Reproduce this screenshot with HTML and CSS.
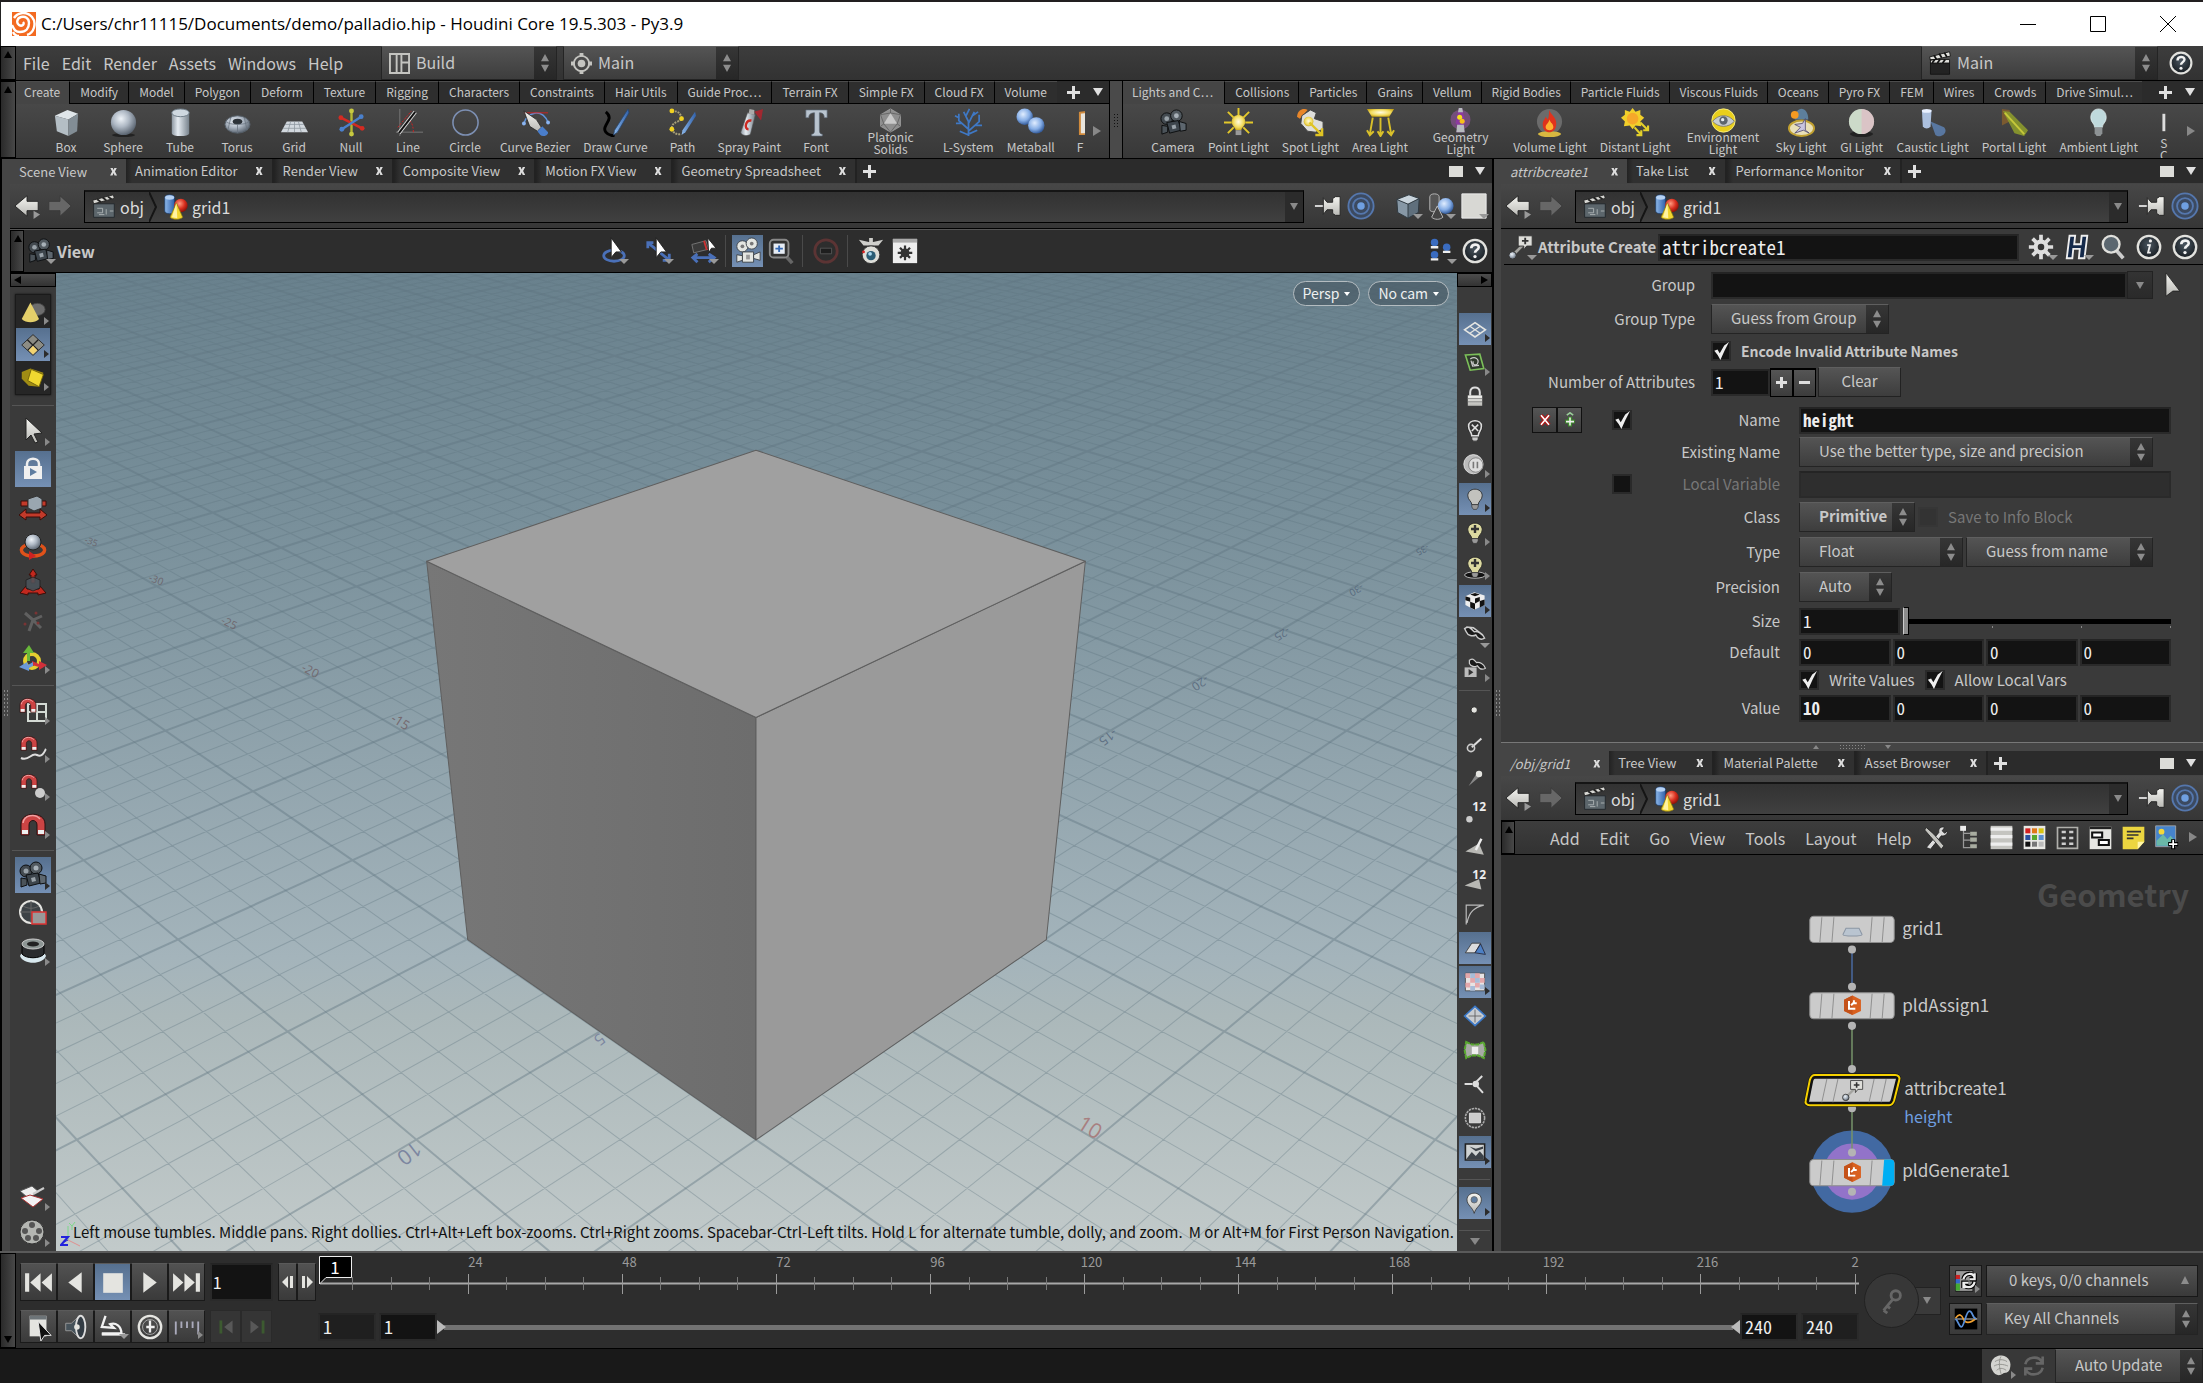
FILE: index.html
```
<!DOCTYPE html>
<html lang="en">
<head>
<meta charset="utf-8">
<title>palladio.hip - Houdini Core</title>
<link rel="stylesheet" href="styles.css">
</head>
<body>
<svg class="defs" aria-hidden="true">
  <defs>
    <linearGradient id="gw" x1="0" y1="0" x2="0" y2="1"><stop offset="0" stop-color="#f4f4f0"/><stop offset="1" stop-color="#b9b9b5"/></linearGradient>
    <linearGradient id="gs" x1="0" y1="0" x2="1" y2="0"><stop offset="0" stop-color="#8e98a2"/><stop offset=".35" stop-color="#e6ecf2"/><stop offset="1" stop-color="#77828c"/></linearGradient>
    <linearGradient id="gl" x1="0" y1="0" x2="1" y2="0"><stop offset="0" stop-color="#8db8ea"/><stop offset="1" stop-color="#2f5fa8"/></linearGradient>
    <radialGradient id="gb" cx=".4" cy=".35" r=".65"><stop offset="0" stop-color="#eef3f8"/><stop offset=".5" stop-color="#aeb8c4"/><stop offset="1" stop-color="#5c6672"/></radialGradient>
    <radialGradient id="gblue" cx=".4" cy=".35" r=".65"><stop offset="0" stop-color="#e0edff"/><stop offset=".6" stop-color="#86aee6"/><stop offset="1" stop-color="#345c9c"/></radialGradient>
    <radialGradient id="gred" cx=".4" cy=".35" r=".65"><stop offset="0" stop-color="#ff9a80"/><stop offset=".6" stop-color="#d82e1e"/><stop offset="1" stop-color="#8a120a"/></radialGradient>
    <radialGradient id="gy" cx=".5" cy=".45" r=".6"><stop offset="0" stop-color="#fffbe0"/><stop offset=".6" stop-color="#f2dc60"/><stop offset="1" stop-color="#c4a010"/></radialGradient>
    <radialGradient id="gd" cx=".5" cy=".4" r=".6"><stop offset="0" stop-color="#4a5660"/><stop offset="1" stop-color="#161b20"/></radialGradient>
  </defs>
  <symbol id="cam" viewBox="0 0 30 30"><g stroke="#0c0e10" stroke-width="1"><circle cx="8" cy="11" r="6" fill="#434a50"/><circle cx="18" cy="8" r="6" fill="#525a60"/><path d="M8 15l12-2 3 10-12 3z" fill="#3d454c"/><path d="M21 14l7 2 0 7-6 1z" fill="#5d666e"/><path d="M3 18l6 1v6l-6 2z" fill="#4b5359"/></g><circle cx="8" cy="11" r="2.500" fill="#98a1a8"/><circle cx="18" cy="8" r="2.500" fill="#a8b1b8"/><path d="M13 18l4-1 1 4-4 1z" fill="#9aa3aa"/></symbol>
  <symbol id="camw" viewBox="0 0 30 30"><g fill="#e4e6e2" stroke="#3c4248" stroke-width="1"><circle cx="9" cy="10" r="6"/><circle cx="19" cy="7" r="6"/><path d="M9 16h12v11H9z"/><path d="M21 19l7-3v9l-7-2z"/><path d="M3 19l6 1v5l-6 2z"/></g><circle cx="9" cy="10" r="2" fill="#777"/><circle cx="19" cy="7" r="2" fill="#777"/><path d="M13 19h4v5h-4z" fill="#999"/></symbol>
  <symbol id="clap" viewBox="0 0 30 30"><path d="M4 12h23v15H4z" fill="#5c666c"/><path d="M4 12h23v15H4z" fill="none" stroke="#23282b"/><path d="M3 8L26 2l1 4L4 12z" fill="#d8d8d4" stroke="#222"/><path d="M8 7l4 3M14 5l4 3M20 4l4 3" stroke="#222" stroke-width="2"/><path d="M8 17h6v5H8M18 18v6M22 20h4M10 24h6" stroke="#aeb4b6" fill="none"/></symbol>
  <symbol id="clapb" viewBox="0 0 30 30"><path d="M4 14h22v14H4z" fill="#232323" stroke="#111"/><path d="M3 8L26 2l1 5L4 12zM4 11h22v4H4z" fill="#e0e0dc" stroke="#111"/><path d="M8 6l3 5M14 4l3 5M20 3l3 5M9 11l-3 4M15 11l-3 4M21 11l-3 4" stroke="#111" stroke-width="2"/></symbol>
  <symbol id="shapes" viewBox="0 0 30 30"><path d="M3 5c0-4 11-4 11 0v15c0 4-11 4-11 0z" fill="url(#gl)" stroke="#1c3a66" stroke-width=".8"/><ellipse cx="8.500" cy="5" rx="5" ry="2.500" fill="#b6d2f4"/><circle cx="21" cy="14" r="7.500" fill="url(#gred)"/><path d="M16 11l7 16c-3 3-11 3-14 0z" fill="#f2d630" stroke="#8d7a10" stroke-width=".8"/><path d="M16 11l1 17-6-1z" fill="#fff3a0"/></symbol>
  <symbol id="back" viewBox="0 0 30 30"><path d="M2 15L15 4v6h12v10H15v6z" fill="url(#gw)" stroke="#222"/><path d="M22 20l7 4-7 5z" fill="#999"/></symbol>
  <symbol id="fwd" viewBox="0 0 30 30"><path d="M27 15L15 4v6H3v10h12v6z" fill="#676767" stroke="#3a3a3a"/></symbol>
  <symbol id="pin" viewBox="0 0 30 30"><path d="M1 15h10" stroke="#ddd" stroke-width="2"/><path d="M10 6l4 5h6V7l3-2h5v20h-5l-3-2v-4h-6l-4 5z" fill="url(#gw)" stroke="#222"/></symbol>
  <symbol id="target" viewBox="0 0 30 30"><g fill="none" stroke="#5577ad" stroke-width="2"><circle cx="15" cy="15" r="13.500" fill="#3c4a60"/><circle cx="15" cy="15" r="8.500"/></g><circle cx="15" cy="15" r="4" fill="#6f9fe0"/></symbol>
  <symbol id="help" viewBox="0 0 30 30"><circle cx="15" cy="15" r="12" fill="url(#gd)" stroke="#e2e2de" stroke-width="2.500"/><path d="M11 12c0-5 8-5 8-1 0 3-4 3-4 6" fill="none" stroke="#f2f2f2" stroke-width="2.800"/><circle cx="15" cy="21" r="1.800" fill="#f2f2f2"/></symbol>
  <symbol id="info" viewBox="0 0 30 30"><circle cx="15" cy="15" r="12" fill="url(#gd)" stroke="#e2e2de" stroke-width="2.500"/><path d="M13 13h3l-2 8h3" fill="none" stroke="#eee" stroke-width="2"/><circle cx="16.500" cy="8.500" r="1.700" fill="#eee"/></symbol>
  <symbol id="cube" viewBox="0 0 30 30"><path d="M3 8l13-5 11 4-12 6z" fill="#c9d4dc"/><path d="M3 8l12 5v15L4 22z" fill="#8798a6"/><path d="M15 13l12-6-1 15-11 6z" fill="#5f6f7c"/><path d="M3 8l13-5 11 4-1 15-11 6L4 22zM3 8l12 5 12-6M15 13v15" fill="none" stroke="#2d3840"/></symbol>
  <symbol id="attr" viewBox="0 0 30 30"><path d="M5 25L17 13" stroke="#a4a4a0" stroke-width="3"/><path d="M12 3h15v11h-6l-3 4v-4h-6z" fill="#dededa" stroke="#333"/><path d="M19.500 5v7M16 8.500h7" stroke="#333" stroke-width="2"/><circle cx="6" cy="24" r="4" fill="url(#gb)" stroke="#333"/></symbol>
  <symbol id="arrow" viewBox="0 0 30 30"><path d="M8 2l16 15-8 1 4 8-3 1-4-8-5 5z" fill="url(#gw)" stroke="#222"/></symbol>
  <symbol id="pick" viewBox="0 0 30 30"><path d="M8 1l16 21-8 0-8 6z" fill="url(#gw)" stroke="#222"/></symbol>
  <symbol id="magnet" viewBox="0 0 30 30"><path d="M3 26V15C3 2 27 2 27 15v11h-8V16c0-6-8-6-8 0v10z" fill="#cc4444" stroke="#2a1010"/><path d="M5 14c1-8 12-10 17-4" stroke="#f0a0a0" fill="none" stroke-width="1.500"/><path d="M4 21h6v4H4zM20 21h6v4h-6z" fill="#eee"/></symbol>
  <symbol id="bulb" viewBox="0 0 30 30"><path d="M11 22c0-4-5-6-5-11C6 0 24 0 24 11c0 5-5 7-5 11z" fill="currentColor" stroke="#222"/><path d="M11 22h8v3l-2 3h-4l-2-3z" fill="#999" stroke="#222" stroke-width=".7"/></symbol>
  <symbol id="gear" viewBox="0 0 30 30"><g stroke="currentColor" stroke-width="4"><path d="M15 2v26M2 15h26M6 6l18 18M24 6L6 24"/></g><circle cx="15" cy="15" r="8" fill="currentColor"/><circle cx="15" cy="15" r="3.500" fill="#333"/></symbol>
  <symbol id="hex" viewBox="0 0 30 30"><path d="M15 1l12 6v16l-12 6-12-6V7z" fill="#d9601f"/><path d="M15 1v28L3 23V7z" fill="#c4521a"/><path d="M10 9v11h9M13 15l4-4M17 8v4h4" fill="none" stroke="#fff" stroke-width="2.800"/></symbol>
</svg>

<header class="titlebar">
  <svg class="logo" viewBox="0 0 24 24"><path d="M0 0h24v24H0z" fill="#f36a21"/><path d="M1 20C2 22 4 24 7 24M0 13c2 4 3 7 8 7 6 0 9-4 9-9s-4-7-8-6-5 6-2 8 6-1 4-3M2 6C6 0 15-1 20 5s2 16-5 18" fill="none" stroke="#fff" stroke-width="2.400"/></svg>
  <h1>C:/Users/chr11115/Documents/demo/palladio.hip - Houdini Core 19.5.303 - Py3.9</h1>
  <div class="win">
    <button aria-label="Minimize"><svg viewBox="0 0 16 16"><path d="M0 8.500h16" /></svg></button>
    <button aria-label="Maximize"><svg viewBox="0 0 16 16"><path d="M.5.5h15v15H.5z"/></svg></button>
    <button aria-label="Close"><svg viewBox="0 0 16 16"><path d="M0 0l16 16M16 0L0 16"/></svg></button>
  </div>
</header>

<nav class="menubar">
  <span class="handle up"></span>
  <ul class="menu"><li>File</li><li>Edit</li><li>Render</li><li>Assets</li><li>Windows</li><li>Help</li></ul>
  <label class="combo desk"><svg viewBox="0 0 22 22"><path d="M1 1h20v20H1zM8 1v20M13 1v20M13 10h8" fill="none" stroke="#c4c4c0" stroke-width="2"/></svg><select aria-label="Desktop"><option>Build</option></select></label>
  <label class="combo desk"><svg viewBox="0 0 22 22"><circle cx="11" cy="11" r="8" fill="none" stroke="#c4c4c0" stroke-width="2"/><circle cx="11" cy="11" r="4" fill="#c4c4c0"/><path d="M9 0h4v4H9zM9 18h4v4H9zM0 9h4v4H0zM18 9h4v4h-4z" fill="#c4c4c0"/></svg><select aria-label="Radial menu"><option>Main</option></select></label>
  <span class="grow"></span>
  <label class="combo take"><svg viewBox="0 0 30 30"><use href="#clapb"/></svg><select aria-label="Take"><option>Main</option></select></label>
  <button class="ib" aria-label="Help"><svg><use href="#help"/></svg></button>
</nav>

<section class="shelves">
  <span class="handle up"></span>
  <div class="shelf left">
    <div class="stabs"><button class="on">Create</button><button>Modify</button><button>Model</button><button>Polygon</button><button>Deform</button><button>Texture</button><button>Rigging</button><button>Characters</button><button>Constraints</button><button>Hair Utils</button><button>Guide Proc…</button><button>Terrain FX</button><button>Simple FX</button><button>Cloud FX</button><button>Volume</button><span class="plus"></span><span class="dn"></span></div>
    <div class="tools">
      <button><svg viewBox="0 0 30 30"><path d="M3 8l13-6 11 4-10 6z" fill="#dfe5e9"/><path d="M3 8l14 4v17L5 24z" fill="#b4bec5"/><path d="M17 12l10-6-1 18-9 5z" fill="#828d95"/></svg><span>Box</span></button>
      <button><svg viewBox="0 0 30 30"><ellipse cx="15" cy="28" rx="12" ry="2" fill="#222"/><circle cx="15" cy="15" r="13" fill="url(#gb)"/></svg><span>Sphere</span></button>
      <button><svg viewBox="0 0 30 30"><path d="M6 5v21c0 4 18 4 18 0V5z" fill="url(#gs)"/><ellipse cx="15" cy="5" rx="9" ry="4" fill="#cfd8e0" stroke="#6f7c88"/></svg><span>Tube</span></button>
      <button><svg viewBox="0 0 30 30"><ellipse cx="15" cy="17" rx="13" ry="9" fill="url(#gb)" stroke="#555e68"/><ellipse cx="15" cy="14" rx="5" ry="3" fill="#2c3238"/><path d="M3 14c4 4 20 4 24 0M8 10l-3 13M22 10l3 13M15 17v9" fill="none" stroke="#6a7480" stroke-width=".8"/></svg><span>Torus</span></button>
      <button><svg viewBox="0 0 30 30"><path d="M7 14h16l6 11H1z" fill="#d2d8de"/><path d="M5 17h20M3 21h24M11 14l-3 11M15 14v11M19 14l3 11" stroke="#8d969e" stroke-width=".8"/></svg><span>Grid</span></button>
      <button><svg viewBox="0 0 30 30"><g stroke-width="2.500"><path d="M15 2v26" stroke="#b6b832"/><path d="M4 10l22 11" stroke="#d42b22"/><path d="M5 22L25 9" stroke="#4a80cc"/></g><circle cx="15" cy="3" r="2.500" fill="#c8ca40"/><circle cx="15" cy="27" r="2.500" fill="#c8ca40"/><circle cx="4" cy="10" r="2.500" fill="#d42b22"/><circle cx="26" cy="21" r="2.500" fill="#d42b22"/><circle cx="5" cy="22" r="2.500" fill="#4a80cc"/><circle cx="25" cy="9" r="2.500" fill="#4a80cc"/></svg><span>Null</span></button>
      <button><svg viewBox="0 0 30 30"><path d="M6 1v28M2 25h28" stroke="#777"/><path d="M20 25C20 15 16 12 12 10M4 20L18 3" fill="none" stroke="#c22" stroke-dasharray="2 1.500"/><path d="M5 26L22 4" stroke="#ddd" stroke-width="4"/><path d="M5 26L22 4" stroke="#111" stroke-width="2"/></svg><span>Line</span></button>
      <button><svg viewBox="0 0 30 30"><circle cx="15" cy="15" r="13" fill="none" stroke="#7d90b4" stroke-width="1.600"/></svg><span>Circle</span></button>
      <button><svg viewBox="0 0 30 30"><path d="M3 16C6 4 22 0 28 15" fill="none" stroke="#5f93dc" stroke-width="1.500"/><path d="M3 5h25" stroke="#c22"/><circle cx="3" cy="16" r="2" fill="#8ab4f0"/><circle cx="28" cy="15" r="2" fill="#8ab4f0"/><path d="M3 3l13 9 5 8-4 4-8-5z" fill="url(#gw)" stroke="#222" stroke-width=".8"/><path d="M17 24l5-5 6 6c0 4-6 5-8 3z" fill="#4a7ecb"/></svg><span>Curve Bezier</span></button>
      <button><svg viewBox="0 0 30 30"><path d="M5 4c6 5 3 9 0 14s0 10 9 11" fill="none" stroke="#000" stroke-width="3"/><path d="M28 1l1 4-12 20-4 3 1-5z" fill="url(#gl)" stroke="#27466f" stroke-width=".8"/></svg><span>Draw Curve</span></button>
      <button><svg viewBox="0 0 30 30"><path d="M4 4c6-2 9 2 10 6S4 14 4 20s6 8 9 7" fill="none" stroke="#a8a078" stroke-dasharray="2 1" stroke-width="2"/><circle cx="4" cy="3" r="2.500" fill="#f0d020"/><circle cx="14" cy="11" r="2.500" fill="#f0d020"/><circle cx="4" cy="22" r="2.500" fill="#f0d020"/><path d="M28 4l1 4-11 17-4 3 1-5z" fill="url(#gl)"/></svg><span>Path</span></button>
      <button><svg viewBox="0 0 30 30"><path d="M13 5l8 2-5 20c-3 3-10 1-10-2z" fill="url(#gs)" stroke="#555" stroke-width=".6"/><path d="M15 1l5 1v5l-6-1z" fill="#aaa"/><path d="M20 4l9-3-2 12z" fill="#b8202a" opacity=".8"/><path d="M17 13c-6-1-8 9-3 9" fill="none" stroke="#cc2a22" stroke-width="2.500"/></svg><span>Spray Paint</span></button>
      <button><svg viewBox="0 0 30 30"><path d="M4 2h22v8h-3c0-4-2-5-5-5v18c0 3 1 4 3 4v2H10v-2c2 0 3-1 3-4V5c-3 0-6 1-6 5H4z" fill="#b9c4cf" stroke="#5e6a76" stroke-width=".7"/></svg><span>Font</span></button>
      <button class="wide"><svg viewBox="0 0 30 30"><path d="M15 1l12 7v14l-12 7-12-7V8z" fill="#8f8f8f" stroke="#bbb" stroke-width=".6"/><path d="M15 6l8 13H7z" fill="#c9c9c9"/><path d="M15 1v5l12 2-4 11 4 3M15 6L3 8l4 11-4 3M7 19l8 10 8-10" fill="none" stroke="#555" stroke-width=".8"/></svg><span>Platonic<br>Solids</span></button>
      <button><svg viewBox="0 0 30 30"><g fill="none" stroke="#3f78c4" stroke-width="1.800"><path d="M15 29V14L10 4M15 16l6-12M15 22L5 13V6M15 24l11-10V7M8 16H2M22 18h7M15 27l9-4M15 28l-9-4M12 9l4-8M19 8l6-4M5 10L1 8"/></g></svg><span>L-System</span></button>
      <button><svg viewBox="0 0 30 30"><circle cx="9" cy="9" r="8.500" fill="url(#gblue)"/><circle cx="21" cy="18" r="8.500" fill="url(#gblue)"/></svg><span>Metaball</span></button>
      <button class="cut"><svg viewBox="0 0 30 30"><path d="M3 5l16-2v24H3z" fill="#e9e5dd" stroke="#d08a3c" stroke-width="2"/></svg><span>F</span></button>
      <span class="rt"></span>
    </div>
  </div>
  <span class="grip"></span>
  <div class="shelf right">
    <div class="stabs"><button class="on">Lights and C…</button><button>Collisions</button><button>Particles</button><button>Grains</button><button>Vellum</button><button>Rigid Bodies</button><button>Particle Fluids</button><button>Viscous Fluids</button><button>Oceans</button><button>Pyro FX</button><button>FEM</button><button>Wires</button><button>Crowds</button><button>Drive Simul…</button><span class="plus"></span><span class="dn"></span></div>
    <div class="tools">
      <button><svg><use href="#cam"/></svg><span>Camera</span></button>
      <button><svg viewBox="0 0 30 30"><g stroke="#e3c82a" stroke-width="2"><path d="M15 0v8M0 15h8M22 15h8M4 4l6 6M26 4l-6 6M4 26l6-6M26 26l-6-6"/></g><path d="M12 23c0-3-4-4-4-9 0-9 14-9 14 0 0 5-4 6-4 9z" fill="url(#gy)"/><path d="M12 23h6v5h-6z" fill="#999"/></svg><span>Point Light</span></button>
      <button><svg viewBox="0 0 30 30"><path d="M1 9C2 0 9 0 12 2l-8 9z" fill="#e8862a"/><path d="M6 8l9-6 6 3-2 6 9 3v8l-8 3-8-1-7-8z" fill="#dededa" stroke="#444"/><circle cx="13" cy="14" r="5" fill="url(#gy)"/><path d="M14 15l12 12M27 21v7h-7" fill="none" stroke="#e0c424" stroke-width="2.500"/></svg><span>Spot Light</span></button>
      <button><svg viewBox="0 0 30 30"><path d="M1 1h28l-5 8H6z" fill="url(#gy)"/><g fill="none" stroke="#d9c02a" stroke-width="2"><path d="M7 10L4 27M15 10v18M23 10l3 17M1 23l3 5 4-4M12 24l3 5 3-5M22 24l4 4 3-5"/></g></svg><span>Area Light</span></button>
      <button class="wide"><svg viewBox="0 0 30 30"><circle cx="15" cy="14" r="12" fill="#9a56a8" opacity=".55"/><path d="M13 0h4l4 18-3 3 2 8H10l2-8-3-3z" fill="#8b3aa0"/><path d="M13 0h4l1 5h-6zM11 20h8l1 9H10z" fill="#b8bcc0"/><circle cx="14" cy="11" r="3" fill="#f6e11a"/><circle cx="17" cy="16" r="3" fill="#f6c01a"/></svg><span>Geometry<br>Light</span></button>
      <button><svg viewBox="0 0 30 30"><circle cx="15" cy="14" r="13" fill="#6b6b6b"/><ellipse cx="15" cy="27" rx="12" ry="3" fill="#d8b840"/><path d="M15 2c1 5 7 7 7 14 0 12-14 12-14 1 0-4 2-5 3-8l2 3c2-3 1-6 2-10z" fill="#e0331c"/><path d="M15 12c1 4 4 4 4 8s-8 4-8 0c0-3 3-4 4-8z" fill="#ffb030"/></svg><span>Volume Light</span></button>
      <button><svg viewBox="0 0 30 30"><path d="M12 0l3 4 5-2v5l4 3-4 4 1 5-6-1-3 4-3-4-6 1 1-5-4-4 4-3V2l5 2z" fill="#f2cf2a"/><circle cx="12" cy="11" r="6" fill="#f6a82a"/><path d="M14 20l7 8M16 28h5v-5M20 15l8 8M23 23h5v-5" fill="none" stroke="#e3d02a" stroke-width="2.200"/></svg><span>Distant Light</span></button>
      <button class="wide"><svg viewBox="0 0 30 30"><circle cx="15" cy="15" r="14" fill="#e9cf1c" stroke="#fff48a"/><path d="M2 16c7-9 19-9 26 0-7 8-19 8-26 0z" fill="#c6ccd0" stroke="#777"/><circle cx="15" cy="15" r="5" fill="#5c666e"/><circle cx="14" cy="14" r="2" fill="#e8eef2"/></svg><span>Environment<br>Light</span></button>
      <button><svg viewBox="0 0 30 30"><path d="M8 12C8-3 22-3 22 12z" fill="#5d7f9c"/><circle cx="8" cy="7" r="4" fill="#f59a22"/><ellipse cx="15" cy="21" rx="13" ry="8" fill="#e8dfb8" stroke="#c0a030" stroke-width="2"/><path d="M19 11v12l4 3-6-3-9 3 6-6-6-3 8-1z" fill="#c8c4e0" stroke="#4b4468" stroke-width=".8"/></svg><span>Sky Light</span></button>
      <button><svg viewBox="0 0 30 30"><ellipse cx="15" cy="27" rx="12" ry="3" fill="#222"/><circle cx="15" cy="14" r="13" fill="#dcdcd6"/><path d="M15 1a13 13 0 0 1 0 26z" fill="#d8b4ba" opacity=".6"/><path d="M15 1a13 13 0 0 0 0 26z" fill="#bcd8bc" opacity=".5"/></svg><span>GI Light</span></button>
      <button><svg viewBox="0 0 30 30"><path d="M13 14l14 6c5 6-4 12-9 8z" fill="#5f84b8" opacity=".8"/><path d="M4 2h10l-1 17c-2 3-6 3-8 0z" fill="#b8cef0" opacity=".9"/><ellipse cx="9" cy="3" rx="5" ry="2" fill="#e8f0ff"/></svg><span>Caustic Light</span></button>
      <button><svg viewBox="0 0 30 30"><path d="M2 1l8 1v12l-8 4z" fill="#7a5a30"/><path d="M3 3l7 1 19 19-4 6-10-3z" fill="#8c9a2c" opacity=".9"/><path d="M5 5l20 22" stroke="#c6c83a" stroke-width="2"/></svg><span>Portal Light</span></button>
      <button><svg viewBox="0 0 30 30"><path d="M11 20c0-4-4-5-4-10 0-12 16-12 16 0 0 5-4 6-4 10z" fill="#bfd9dc" stroke="#e8f4f4" stroke-width=".7"/><path d="M11 20h8v6l-2 3h-4l-2-3z" fill="#8d9294"/></svg><span>Ambient Light</span></button>
      <button class="cut"><svg viewBox="0 0 30 30"><path d="M4 6v18" stroke="#ddd" stroke-width="3"/></svg><span>S<br>C</span></button>
      <span class="rt"></span>
    </div>
  </div>
</section>

<main class="desk-area">
  <div class="vsplit"></div>
  <section class="pane scene">
    <div class="ptabs"><button class="on">Scene View<i></i></button><button>Animation Editor<i></i></button><button>Render View<i></i></button><button>Composite View<i></i></button><button>Motion FX View<i></i></button><button>Geometry Spreadsheet<i></i></button><span class="plus"></span><span class="grow"></span><span class="sq"></span><span class="dn"></span></div>
    <div class="path">
      <button class="ib"><svg><use href="#back"/></svg></button><button class="ib"><svg><use href="#fwd"/></svg></button>
      <div class="crumbs"><a href="#obj"><svg><use href="#clap"/></svg>obj</a><svg class="chev" viewBox="0 0 8 30"><path d="M0 0l7 15-7 15" fill="none" stroke="#151515" stroke-width="2"/></svg><a href="#grid1"><svg><use href="#shapes"/></svg>grid1</a><span class="pd"></span></div>
      <button class="ib"><svg><use href="#pin"/></svg></button><button class="ib"><svg><use href="#target"/></svg></button>
      <button class="ib c m1"><svg><use href="#cube"/></svg></button>
      <button class="ib c"><svg viewBox="0 0 30 30"><path d="M3 5c0-4 10-4 10 0v14c0 3-10 3-10 0z" fill="#555" stroke="#bbb"/><circle cx="20" cy="15" r="8.500" fill="url(#gblue)"/><path d="M11 15l6 12c-3 3-9 3-12 0z" fill="#444" stroke="#bbb"/></svg></button>
      <button class="ib c"><svg viewBox="0 0 30 30"><path d="M2 2h26v26H2z" fill="#d8d8d4" stroke="#eee"/></svg></button>
    </div>
    <div class="vbar">
      <span class="handle up"></span>
      <button class="ib c"><svg><use href="#cam"/></svg></button><b>View</b>
      <span class="grow"></span>
      <div class="vtools">
        <div class="vg first">
          <button class="ib c"><svg viewBox="0 0 30 30"><ellipse cx="15" cy="20" rx="11" ry="6" fill="none" stroke="#4a70b8" stroke-width="3"/><path d="M12 1l11 15-6 0-5 6z" fill="#fff" stroke="#222"/></svg></button>
          <button class="ib c"><svg viewBox="0 0 30 30"><path d="M3 6l22 18M3 12V6h6M19 25h7v-7" fill="none" stroke="#4a70b8" stroke-width="3"/><path d="M12 1l11 15-6 0-5 6z" fill="#fff" stroke="#222"/></svg></button>
          <button class="ib c"><svg viewBox="0 0 30 30"><path d="M2 8l15-4 3 9-16 4z" fill="#3a3a3a" stroke="#777"/><path d="M15 4l3 10" stroke="#c33" stroke-width="2"/><path d="M4 22h20M8 18l-5 4 5 5M20 18l6 4-6 5" fill="none" stroke="#4a70b8" stroke-width="3"/><path d="M19 1l9 11h-5l-3 5z" fill="#fff" stroke="#222"/></svg></button>
        </div>
        <div class="vg">
          <button class="ib hl"><svg><use href="#camw"/></svg></button>
          <button class="ib"><svg viewBox="0 0 30 30"><path d="M20 20l7 8" stroke="#666" stroke-width="4"/><rect x="3" y="3" width="20" height="19" rx="4" fill="#333" stroke="#888" stroke-width="2"/><path d="M7 7h12v11H7z" fill="#e6ecf4"/><path d="M9 12.500h8M13 9v7" stroke="#3468b4" stroke-width="2"/></svg></button>
        </div>
        <div class="vg">
          <button class="ib"><svg viewBox="0 0 30 30"><circle cx="15" cy="15" r="12" fill="none" stroke="#5c3434" stroke-width="3"/><path d="M9 12h12v6H9z" fill="#1e1e1e" stroke="#555"/></svg></button>
        </div>
        <div class="vg">
          <button class="ib"><svg viewBox="0 0 30 30"><path d="M2 3l13 3 13-3-5 6H7zM13 1h4v6h-4z" fill="#cfcfcb"/><circle cx="15" cy="19" r="9.500" fill="#deded8" stroke="#333"/><circle cx="15" cy="20" r="5" fill="#2a5c74"/><circle cx="14" cy="18" r="2" fill="#a8d8f0"/><circle cx="7" cy="16" r="1.500" fill="#d22"/></svg></button>
          <button class="ib dark"><svg viewBox="0 0 30 30"><path d="M2 2h26v26H2z" fill="#eee"/><path d="M2 2h26v4H2z" fill="#aaa"/><use href="#gear" x="6" y="8" width="18" height="18"/></svg></button>
        </div>
      </div>
      <span class="grow"></span>
      <button class="ib c"><svg viewBox="0 0 30 30"><g fill="#3a6cc0"><circle cx="7" cy="6" r="4"/><circle cx="7" cy="19" r="4"/><circle cx="20" cy="11" r="4"/></g><path d="M3 11h8M3 24h8M16 16h8" stroke="#eee" stroke-width="2.500"/></svg></button>
      <button class="ib"><svg><use href="#help"/></svg></button>
    </div>
    <div class="work">
      <aside class="ltools">
        <span class="hh lf"></span>
        <div class="tgroup">
          <button class="ib r"><svg viewBox="0 0 30 30"><ellipse cx="20" cy="12" rx="9" ry="7" fill="#6d6d6d" stroke="#444"/><path d="M12 4l10 19c-5 5-15 5-20 0z" fill="#e4cf6a"/></svg></button>
          <button class="ib r hl"><svg viewBox="0 0 30 30"><path d="M15 3l13 12-13 12L2 15z" fill="#8c8c84" stroke="#222"/><path d="M8.500 9L21 21M21 9L9 21" stroke="#222" stroke-width="1.500"/><path d="M15 16l5 5-5 5-5-5z" fill="#f3d470"/></svg></button>
          <button class="ib r"><svg viewBox="0 0 30 30"><path d="M2 8l10-4 15 5-5 16-12-1-8-8z" fill="#a08c14"/><path d="M13 5l14 6-5 14-13-7z" fill="#f0d830" stroke="#6d5e08"/></svg></button>
        </div>
        <span class="sep"></span>
        <button class="tb r"><svg><use href="#arrow"/></svg></button>
        <button class="tb hl"><svg viewBox="0 0 30 30"><path d="M9 13V10c0-7 12-7 12 0v3" fill="none" stroke="#eee" stroke-width="2.500"/><path d="M6 12h18v13H6z" fill="#f0f0f0"/><path d="M12 14l7 4-7 4z" fill="#5f7da0"/></svg></button>
        <button class="tb"><svg viewBox="0 0 30 30"><path d="M1 23l7-6v4h14v-4l7 6-7 5v-3H8v3zM3 9h7v5H3zM22 9h6v5h-6z" fill="#c23a2a" stroke="#3a0d08"/><path d="M10 7l9-3 5 3v9l-8 3-6-3z" fill="#9aa6b0" stroke="#333"/></svg></button>
        <button class="tb"><svg viewBox="0 0 30 30"><path d="M8 15C-1 19 4 26 15 26M22 15c9 4 4 11-7 11" fill="none" stroke="#e0521a" stroke-width="3.500"/><path d="M11 21l7 5-7 4z" fill="#c22"/><circle cx="15" cy="12" r="8" fill="url(#gb)" stroke="#222"/></svg></button>
        <button class="tb"><svg viewBox="0 0 30 30"><path d="M15 1l4 6h-2v8h-4V7h-2zM2 25l6-7 1 3h12l1-3 6 7-8 2v-2H10v2z" fill="#c2281e" stroke="#3a0d08"/><path d="M8 12l7-3 7 3v8l-7 3-7-3z" fill="#4c555c" opacity=".85" stroke="#222"/></svg></button>
        <button class="tb"><svg viewBox="0 0 30 30"><g stroke="#606060" stroke-width="3"><path d="M15 14L7 7M15 14l9-4M15 14l-4 11M15 14l8 8"/></g><g fill="#7a3434"><circle cx="18" cy="7" r="1.500"/><circle cx="7" cy="18" r="1.500"/><circle cx="20" cy="17" r="1.500"/></g></svg></button>
        <button class="tb r"><svg viewBox="0 0 30 30"><circle cx="14" cy="17" r="7" fill="none" stroke="#e6cf30" stroke-width="4"/><path d="M11 1l5 8-4 0v8h-3V9H5z" fill="#68b83a"/><path d="M29 21l-8-4v3l-7-3v4l7 2v3z" fill="#d2303a"/><path d="M1 23l8-5 1 3 5-3v4l-4 2v3z" fill="#6a98d8"/></svg></button>
        <span class="sep s"></span>
        <button class="tb r"><svg viewBox="0 0 30 30"><path d="M10 9h18v17H10zM10 17h18M19 9v17" fill="none" stroke="#d4dad4" stroke-width="2"/><use href="#magnet" width="20" height="20"/></svg></button>
        <button class="tb r"><svg viewBox="0 0 30 30"><path d="M3 25c8 4 10-6 16-3s8-5 9-6" fill="none" stroke="#ddd" stroke-width="2"/><use href="#magnet" x="1" width="20" height="20"/></svg></button>
        <button class="tb r"><svg viewBox="0 0 30 30"><circle cx="22" cy="22" r="5" fill="#ccc"/><use href="#magnet" x="1" width="20" height="20"/></svg></button>
        <button class="tb r"><svg><use href="#magnet"/></svg></button>
        <span class="sep s"></span>
        <button class="tb r hl"><svg><use href="#cam"/></svg></button>
        <button class="tb"><svg viewBox="0 0 30 30"><circle cx="13" cy="14" r="11" fill="#3c4246" stroke="#e4e4e0" stroke-width="2"/><path d="M2 14h22M13 3v22M5 8c5 3 11 3 16 0" fill="none" stroke="#666"/><path d="M14 14h14v12H14z" fill="#999" stroke="#d33" stroke-width="1.500"/></svg></button>
        <button class="tb r"><svg viewBox="0 0 30 30"><path d="M2 20c3-8 23-8 26 0-3 9-23 9-26 0z" fill="#d8e8ee"/><path d="M4 8v10c4 5 18 5 22 0V8z" fill="#2a2c2e" stroke="#000"/><ellipse cx="15" cy="8" rx="11" ry="5" fill="#8d9694" stroke="#ccc"/><ellipse cx="15" cy="8" rx="6" ry="2.500" fill="#222"/></svg></button>
        <span class="grow"></span>
        <button class="tb r s"><svg viewBox="0 0 30 30"><path d="M2 9l12-5 7 6-11 6z" fill="#eee" stroke="#555"/><path d="M3 16l9-3 13 4-10 8z" fill="#f2f2f4" stroke="#a33"/><path d="M15 12l11-6" stroke="#ccc" stroke-width="2"/></svg></button>
        <button class="tb r s"><svg viewBox="0 0 30 30"><circle cx="14" cy="14" r="12" fill="#b4b6b2" stroke="#333"/><g fill="#555"><circle cx="14" cy="7" r="3"/><circle cx="7" cy="13" r="3"/><circle cx="21" cy="13" r="3"/><circle cx="10" cy="20" r="3"/><circle cx="18" cy="20" r="3"/></g></svg></button>
      </aside>
      <div class="view">
        <svg class="scene3d" viewBox="0 0 1401 977" preserveAspectRatio="xMidYMid slice">
          <defs>
            <linearGradient id="sky" gradientUnits="userSpaceOnUse" x1="0" y1="0" x2="0" y2="977"><stop offset="0" stop-color="#69818d"/><stop offset=".25" stop-color="#788f9a"/><stop offset=".5" stop-color="#91a4ad"/><stop offset=".7" stop-color="#a4b4bb"/><stop offset=".76" stop-color="#abb8ba"/><stop offset="1" stop-color="#c2caca"/></linearGradient>
            <linearGradient id="fl" x1="0" y1="0" x2="1" y2="0"><stop offset="0" stop-color="#777"/><stop offset="1" stop-color="#6d6d6d"/></linearGradient>
          </defs>
          <path d="M-400-400h2200v1800H-400z" fill="url(#sky)"/>
          <g id="floor"></g>
          <g id="marks"></g>
          <g stroke="#5f5f5f" stroke-width="1" stroke-linejoin="round"><path d="M371 288l41 378 288 200V444z" fill="url(#fl)"/><path d="M1029 288l-39 378-290 200V444z" fill="#9a9a9a"/><path d="M700 177l329 111-329 156-329-156z" fill="#a0a0a0"/></g>
        </svg>
        <div class="cams"><button>Persp<i></i></button><button>No cam<i></i></button></div>
        <svg class="axes" viewBox="0 0 26 26"><path d="M8 18V4" stroke="#7fd68a"/><path d="M8 18l12 6" stroke="#e09090"/><path d="M8 18l-4 2" stroke="#22c"/><path d="M1 15h7l-7 8h7" fill="none" stroke="#22d" stroke-width="2"/><path d="M9 1l3 3 3-4M12 4v4" fill="none" stroke="#7fd68a"/></svg>
        <p class="hint"><span>Left mouse tumbles. Middle pans. Right dollies. Ctrl+Alt+Left box-zooms. Ctrl+Right zooms. Spacebar-Ctrl-Left tilts. Hold L for alternate tumble, dolly, and zoom.</span><span>M or Alt+M for First Person Navigation.</span></p>
      </div>
      <aside class="rtools">
        <span class="hh rg"></span>
        <button class="db r hl"><svg viewBox="0 0 30 30"><path d="M15 7l13 9-13 9-13-9z" fill="none" stroke="#e6e6e2" stroke-width="2"/><path d="M9 12l12 8M21 12L9 20" stroke="#e6e6e2" stroke-width="1.500"/></svg></button>
        <button class="db r"><svg viewBox="0 0 30 30"><path d="M3 5l18-1 5 18-17 2z" fill="#2f3a2c" stroke="#7cc05a" stroke-width="2"/><path d="M9 10c6-4 12 0 9 6-3 3-7 0-5-3M10 12l2 7 8-1" fill="none" stroke="#ccc" stroke-width="1.500"/></svg></button>
        <button class="db"><svg viewBox="0 0 30 30"><path d="M9 13V9c0-8 12-8 12 0v4" fill="none" stroke="#ddd" stroke-width="2.500"/><path d="M6 13h18v13H6z" fill="url(#gw)"/><path d="M6 17h18M6 21h18" stroke="#777"/></svg></button>
        <button class="db dark"><svg viewBox="0 0 30 30"><use href="#bulb"/><path d="M7 9c0-9 16-9 16 0 0 6-4 7-4 12h-8c0-5-4-6-4-12zM11 7l8 8M19 7l-8 8M12 25h6" fill="none" stroke="#ddd" stroke-width="2"/></svg></button>
        <button class="db r"><svg viewBox="0 0 30 30"><circle cx="13" cy="14" r="12" fill="#bbb" stroke="#eee"/><circle cx="16" cy="15" r="9" fill="#ddd" stroke="#777"/><path d="M13 11v8M18 11v8" stroke="#777" stroke-width="2"/></svg></button>
        <button class="db r hl bl1"><svg><use href="#bulb"/></svg></button>
        <button class="db r bl2"><svg viewBox="0 0 30 30"><use href="#bulb"/><path d="M15 5v10M10 10h10" stroke="#333" stroke-width="3"/></svg></button>
        <button class="db r bl2"><svg viewBox="0 0 30 30"><ellipse cx="15" cy="25" rx="13" ry="4" fill="#111" stroke="#ddd"/><use href="#bulb"/><path d="M15 5v10M10 10h10" stroke="#333" stroke-width="3"/></svg></button>
        <button class="db r hl"><svg viewBox="0 0 30 30"><path d="M3 9l11-5 13 4v12l-13 6-11-6z" fill="#eee"/><path d="M3 9l6 2v5l-6-2zM9 16l6 2v8l-6-3zM15 12l6-2v5l-6 3zM21 15l6-2v7l-6 3zM9 7l6 2 6-2-6-2z" fill="#111"/></svg></button>
        <button class="db d"><svg viewBox="0 0 30 30"><path d="M2 7c6-4 8 0 12 4 4-1 10 2 13 8-5 3-9 0-11-4-4 2-10 1-12-4zM4 5l9 1 12 9" fill="#1a1a1a" stroke="#ccc" stroke-width="1.800"/></svg></button>
        <button class="db r"><svg viewBox="0 0 30 30"><path d="M8 4c5-3 6 0 9 3 4-1 9 2 11 7-5 3-8 0-10-3-4 2-8 1-10-3z" fill="#1a1a1a" stroke="#ccc" stroke-width="1.500"/><path d="M2 13h15v12H2z" fill="#bbb"/><path d="M7 15l6 4-6 4z" fill="#333"/></svg></button>
        <span class="sep s"></span>
        <button class="db"><svg viewBox="0 0 30 30"><circle cx="14" cy="15" r="4" fill="#e4e4e0" stroke="#111"/></svg></button>
        <button class="db"><svg viewBox="0 0 30 30"><path d="M11 19L23 8" stroke="#ddd" stroke-width="2.500"/><circle cx="10" cy="20" r="4.500" fill="none" stroke="#ccc" stroke-width="2"/></svg></button>
        <button class="db"><svg viewBox="0 0 30 30"><path d="M7 25l9-14 4 3z" fill="#888"/><circle cx="20" cy="10" r="4" fill="#e4e4e0"/></svg></button>
        <button class="db num"><svg viewBox="0 0 30 30"><circle cx="8" cy="24" r="4" fill="#ccc"/></svg><b>12</b></button>
        <button class="db"><svg viewBox="0 0 30 30"><path d="M3 22l17-10 6 14z" fill="#b8b8b4"/><path d="M16 20l7-14" stroke="#eee" stroke-width="3"/></svg></button>
        <button class="db num"><svg viewBox="0 0 30 30"><path d="M2 22l18-8 3 13z" fill="#b8b8b4"/></svg><b>12</b></button>
        <button class="db"><svg viewBox="0 0 30 30"><path d="M4 28V4h22M5 26C8 12 14 7 26 4" fill="none" stroke="#bbb" stroke-width="1.500"/></svg></button>
        <button class="db hl"><svg viewBox="0 0 30 30"><path d="M3 21L11 9h11l-7 12z" fill="#ddd" stroke="#333"/><path d="M15 21l7-11 6 13z" fill="#4d80c4" stroke="#223"/></svg></button>
        <button class="db r hl"><svg viewBox="0 0 30 30"><path d="M3 4h24v22H3z" fill="#e8e4e4" stroke="#444"/><path d="M3 4h6v6H3zM15 4h6v6h-6zM9 10h6v6H9zM21 10h6v6h-6zM3 16h6v6H3zM15 16h6v6h-6z" fill="#e4a8ac"/><path d="M9 4h6v6H9zM15 10h6v6h-6zM9 20h6v6H9zM21 18h6v6h-6z" fill="#a8bcd8"/></svg></button>
        <button class="db"><svg viewBox="0 0 30 30"><path d="M15 3l13 12-13 12L2 15z" fill="#c8ccd0" stroke="#3a78c8" stroke-width="2"/><path d="M15 7v16M7 15h16" stroke="#555"/></svg></button>
        <button class="db"><svg viewBox="0 0 30 30"><path d="M4 5l7 3h8l7-3 2 10-2 10-7-3h-8l-7 3-2-10z" fill="#a8aaa6" stroke="#58a82e" stroke-width="2.500" stroke-dasharray="5 1"/><path d="M11 11h8v9h-8z" fill="#eee"/></svg></button>
        <button class="db"><svg viewBox="0 0 30 30"><path d="M2 15h10M16 13l8-8M17 17l8 9" stroke="#ddd" stroke-width="2.500"/><circle cx="16" cy="15" r="4" fill="#ddd"/></svg></button>
        <button class="db"><svg viewBox="0 0 30 30"><circle cx="15" cy="15" r="12" fill="none" stroke="#aaa" stroke-width="2" stroke-dasharray="3 1"/><path d="M8 9h14v12H8z" fill="#ccc" stroke="#eee"/></svg></button>
        <button class="db r hl"><svg viewBox="0 0 30 30"><path d="M3 5h24v20H3z" fill="#cfd2d2" stroke="#222" stroke-width="2"/><path d="M4 24l7-9 5 5 5-6 5 6v4zM8 8l8 3 9-3v3l-9 3z" fill="#3c4248"/></svg></button>
        <span class="sep t"></span>
        <button class="db r hl"><svg viewBox="0 0 30 30"><path d="M14 28C12 20 5 18 5 11 5 0 23 0 23 11c0 7-7 9-9 17z" fill="url(#gw)" stroke="#333"/><circle cx="14" cy="11" r="4" fill="#5f7da0" stroke="#666"/></svg></button>
        <span class="sep t"></span>
        <span class="more"></span>
      </aside>
    </div>
  </section>
  <div class="vsplit"></div>
  <div class="col">
    <section class="pane params">
      <div class="ptabs"><button class="on it">attribcreate1<i></i></button><button>Take List<i></i></button><button>Performance Monitor<i></i></button><span class="plus"></span><span class="grow"></span><span class="sq"></span><span class="dn"></span></div>
      <div class="path">
        <button class="ib"><svg><use href="#back"/></svg></button><button class="ib"><svg><use href="#fwd"/></svg></button>
        <div class="crumbs"><a href="#obj"><svg><use href="#clap"/></svg>obj</a><svg class="chev" viewBox="0 0 8 30"><path d="M0 0l7 15-7 15" fill="none" stroke="#151515" stroke-width="2"/></svg><a href="#grid1"><svg><use href="#shapes"/></svg>grid1</a><span class="pd"></span></div>
        <button class="ib"><svg><use href="#pin"/></svg></button><button class="ib"><svg><use href="#target"/></svg></button>
      </div>
      <div class="opname">
        <button class="ib c"><svg><use href="#attr"/></svg></button>
        <label for="opn">Attribute Create</label><input id="opn" value="attribcreate1">
        <button class="ib c lite"><svg><use href="#gear"/></svg></button>
        <button class="ib c"><svg viewBox="0 0 30 30"><path d="M7 3h6l-1 9h7l1-9h6l-3 24h-6l1-10h-7l-1 10H4z" fill="#14294a" stroke="#eee" stroke-width="2"/></svg></button>
        <button class="ib"><svg viewBox="0 0 30 30"><path d="M18 18l8 9" stroke="#ccc" stroke-width="4"/><circle cx="13" cy="12" r="9" fill="#5b6770" stroke="#e0e0dc" stroke-width="2.500"/></svg></button>
        <button class="ib"><svg><use href="#info"/></svg></button>
        <button class="ib"><svg><use href="#help"/></svg></button>
      </div>
      <form class="form">
        <div class="row h34 top"><label class="l1" for="grp">Group</label><input id="grp" class="grow"><button type="button" class="dd"></button><button type="button" class="ib pick"><svg><use href="#pick"/></svg></button></div>
        <div class="row h34"><label class="l1" for="gt">Group Type</label><span class="combo w178"><select id="gt"><option>Guess from Group</option></select></span></div>
        <div class="row h30"><span class="l1"></span><input type="checkbox" id="enc" checked><label for="enc" class="ct enc">Encode Invalid Attribute Names</label></div>
        <div class="row h32"><label class="l1" for="na">Number of Attributes</label><input id="na" class="w58" value="1"><button type="button" class="pm"><span class="plus"></span></button><button type="button" class="pm"><span class="minus"></span></button><button type="button" class="clear">Clear</button></div>
        <div class="row h32 mt"><span class="rm"><button type="button"><svg viewBox="0 0 20 20"><path d="M5 4l10 12M15 4L5 16" stroke="#b01818" stroke-width="5"/><path d="M5 4l10 12M15 4L5 16" stroke="#fff" stroke-width="2"/></svg></button><button type="button"><svg viewBox="0 0 20 20"><path d="M10 6v12M4 12h12" stroke="#3c8a2a" stroke-width="5" fill="none"/><path d="M10 7v10M5 12h10" stroke="#eee" stroke-width="2"/><path d="M6 4l4-3 4 3" fill="none" stroke="#9c9" stroke-width="2"/></svg></button></span><input type="checkbox" aria-label="Enable attribute" checked><label class="l2" for="nm">Name</label><input id="nm" class="grow b" value="height"></div>
        <div class="row h32"><label class="l3" for="en">Existing Name</label><span class="combo grow mr"><select id="en"><option>Use the better type, size and precision</option></select></span></div>
        <div class="row h32"><span class="rm"></span><input type="checkbox" aria-label="Use local variable"><label class="l2 off" for="lv">Local Variable</label><input id="lv" class="grow" disabled></div>
        <div class="row h34"><label class="l3" for="cl">Class</label><span class="combo w116"><select id="cl" class="b"><option>Primitive</option></select></span><input type="checkbox" id="sib" disabled><label for="sib" class="ct off">Save to Info Block</label></div>
        <div class="row h36"><label class="l3" for="ty">Type</label><span class="combo w164"><select id="ty"><option>Float</option></select></span><span class="combo grow mr ml"><select aria-label="Type info"><option>Guess from name</option></select></span></div>
        <div class="row h34"><label class="l3" for="pr">Precision</label><span class="combo w93"><select id="pr"><option>Auto</option></select></span></div>
        <div class="row h34"><label class="l3" for="sz">Size</label><input id="sz" class="w101" value="1"><input type="range" class="grow" aria-label="Size slider" min="1" max="4" value="1"></div>
        <div class="row h28"><span class="l3">Default</span><span class="four"><input aria-label="Default 1" value="0"><input aria-label="Default 2" value="0"><input aria-label="Default 3" value="0"><input aria-label="Default 4" value="0"></span></div>
        <div class="row h28"><span class="l3"></span><input type="checkbox" id="wv" checked><label for="wv" class="ct">Write Values</label><input type="checkbox" id="al" class="ml2" checked><label for="al" class="ct">Allow Local Vars</label></div>
        <div class="row h28"><span class="l3">Value</span><span class="four"><input aria-label="Value 1" class="b" value="10"><input aria-label="Value 2" value="0"><input aria-label="Value 3" value="0"><input aria-label="Value 4" value="0"></span></div>
      </form>
    </section>
    <div class="hsplit"><i class="u"></i><i class="dots"></i><i class="d"></i></div>
    <section class="pane net">
      <div class="ptabs"><button class="on it">/obj/grid1<i></i></button><button>Tree View<i></i></button><button>Material Palette<i></i></button><button>Asset Browser<i></i></button><span class="plus"></span><span class="grow"></span><span class="sq"></span><span class="dn"></span></div>
      <div class="path">
        <button class="ib"><svg><use href="#back"/></svg></button><button class="ib"><svg><use href="#fwd"/></svg></button>
        <div class="crumbs"><a href="#obj"><svg><use href="#clap"/></svg>obj</a><svg class="chev" viewBox="0 0 8 30"><path d="M0 0l7 15-7 15" fill="none" stroke="#151515" stroke-width="2"/></svg><a href="#grid1"><svg><use href="#shapes"/></svg>grid1</a><span class="pd"></span></div>
        <button class="ib"><svg><use href="#pin"/></svg></button><button class="ib"><svg><use href="#target"/></svg></button>
      </div>
      <div class="nmenu">
        <span class="handle up"></span>
        <ul class="menu"><li>Add</li><li>Edit</li><li>Go</li><li>View</li><li>Tools</li><li>Layout</li><li>Help</li></ul>
        <div class="nicons">
          <button class="ib"><svg viewBox="0 0 30 30"><path d="M4 27L19 9c-1-5 3-8 7-6l-3 4 3 3 3-3c1 4-3 7-7 6L9 29z" fill="#ddd" stroke="#222"/><path d="M4 3l9 8 12 14-3 4L9 14 2 6z" fill="#c4c4c0" stroke="#222"/></svg></button>
          <button class="ib"><svg viewBox="0 0 30 30"><path d="M9 3v24h8M9 10h8M9 18h8" fill="none" stroke="#999" stroke-width="1.500"/><path d="M5 1h7v6H5z" fill="#eee"/><path d="M17 8h8v5h-8zM17 15h8v5h-8zM17 23h8v5h-8z" fill="#a8aca0"/></svg></button>
          <button class="ib"><svg viewBox="0 0 30 30"><path d="M2 1h26v28H2z" fill="#c4c4c0"/><path d="M2 3h26v4H2zM2 12h26v4H2zM2 21h26v4H2z" fill="#eee"/></svg></button>
          <button class="ib"><svg viewBox="0 0 30 30"><path d="M2 1h26v28H2z" fill="#e8e8e4"/><path d="M4 4h6v6H4z" fill="#d42020"/><path d="M12 4h6v6h-6z" fill="#e07818"/><path d="M20 4h6v6h-6z" fill="#d8c410"/><path d="M4 12h6v6H4z" fill="#2a50a0"/><path d="M12 12h6v6h-6z" fill="#58a82e"/><path d="M20 12h6v6h-6z" fill="#5a90d0"/><path d="M4 20h6v6H4z" fill="#111"/><path d="M12 20h6v6h-6z" fill="#777"/><path d="M20 20h6v6h-6z" fill="#bbb"/></svg></button>
          <button class="ib"><svg viewBox="0 0 30 30"><path d="M3 3h24v25H3z" fill="#333" stroke="#b0b0ac" stroke-width="2"/><path d="M8 7h5v3H8zM17 7h5v3h-5zM8 14h5v3H8zM17 14h5v3h-5zM8 21h5v3H8zM17 21h5v3h-5z" fill="#ccc"/></svg></button>
          <button class="ib"><svg viewBox="0 0 30 30"><path d="M2 2h26v27H2z" fill="#e6e6e2"/><path d="M2 2h26v3H2z" fill="#222"/><path d="M5 9h12v6H5zM13 18h12v6H13z" fill="#fff" stroke="#111" stroke-width="2.500"/></svg></button>
          <button class="ib"><svg viewBox="0 0 30 30"><path d="M2 2h26v18l-8 9H2z" fill="#ecd640"/><path d="M28 20l-8 9v-9z" fill="#fff6a8"/><path d="M7 8h17M7 12h14M7 16h8" stroke="#333" stroke-width="2"/></svg></button>
          <button class="ib"><svg viewBox="0 0 30 30"><path d="M2 1h24v25H2z" fill="#4684cc" stroke="#aaa"/><path d="M3 25v-6l8-8 5 6 4-4 5 6v6z" fill="#6ab8a8"/><circle cx="9" cy="8" r="3.500" fill="#f4d83a"/><path d="M23 17v12M17 23h12" stroke="#000" stroke-width="5"/><path d="M23 18v10M18 23h10" stroke="#fff" stroke-width="2"/></svg></button>
        </div>
        <span class="rt"></span>
      </div>
      <div class="canvas">
        <b class="ctx">Geometry</b>
        <svg viewBox="0 0 702 394" preserveAspectRatio="xMidYMin slice">
          <circle cx="351" cy="315" r="41" fill="#4269a2"/><circle cx="351" cy="315" r="28" fill="#9273c9"/>
          <path d="M351 94v36" stroke="#4a6aa0" stroke-width="1.500"/><path d="M351 170v43M351 252v44" stroke="#76936a" stroke-width="1.500"/>
          <g fill="#b4b4b4"><circle cx="351" cy="94" r="4"/><circle cx="351" cy="131" r="4"/><circle cx="351" cy="170" r="4"/><circle cx="351" cy="213" r="4"/><circle cx="351" cy="252" r="4"/><circle cx="351" cy="296" r="4"/><circle cx="351" cy="335" r="4"/></g>
          <g fill="#cbcbcb" stroke="#8d8d8d"><rect x="309" y="61" width="84" height="26" rx="4"/><rect x="309" y="137" width="84" height="26" rx="4"/><rect x="309" y="303" width="84" height="26" rx="4"/></g>
          <path d="M383 303h6c3 0 4 1 4 4v18c0 3-1 4-4 4h-8z" fill="#00aef3"/>
          <path d="M314 220h80c3 0 4 2 3 4l-5 20c-1 3-2 4-4 4h-79c-3 0-4-1-3-4l4-20c1-3 2-4 4-4z" fill="#cbcbcb" stroke="#111" stroke-width="5"/><path d="M314 219h80c3 0 5 2 4 5l-5 20c-1 3-2 5-5 5h-79c-3 0-5-2-4-5l4-20c1-3 2-5 5-5z" fill="none" stroke="#f5d000" stroke-width="2"/>
          <g stroke="#909090"><path d="M321 62l-2 25M333 62l-2 25M371 62l-2 25M383 62l-2 25M321 138l-2 25M333 138l-2 25M371 138l-2 25M383 138l-2 25M321 304l-2 25M333 304l-2 25M371 304l-2 25M326 223l-5 23M337 223l-5 23M373 223l-5 23M385 223l-5 23"/></g>
          <path d="M345 73h13l3 6c0 2-19 2-19 0z" fill="#b9c4d0" stroke="#8b96a4"/>
          <use href="#hex" x="341" y="139" width="21" height="21"/><use href="#hex" x="341" y="305" width="21" height="21"/><use href="#attr" x="340" y="222" width="24" height="24"/>
          <g class="nl"><text x="401" y="80">grid1</text><text x="401" y="156">pldAssign1</text><text x="403" y="239">attribcreate1</text><text x="403" y="267" class="hi">height</text><text x="401" y="320">pldGenerate1</text></g>
        </svg>
      </div>
    </section>
  </div>
</main>

<footer class="playbar">
  <span class="handle dnn"></span>
  <div class="transport">
    <div class="tr1">
      <div class="bg"><button><svg viewBox="0 0 30 30"><path d="M2 6h4v18H2zM17 6v18L7 15zM28 6v18L18 15z"/></svg></button><button><svg viewBox="0 0 30 30"><path d="M21 5v20L8 15z"/></svg></button><button class="hl"><svg viewBox="0 0 30 30"><path d="M6 6h19v19H6z"/></svg></button><button><svg viewBox="0 0 30 30"><path d="M9 5v20l13-10z"/></svg></button><button><svg viewBox="0 0 30 30"><path d="M24 6h4v18h-4zM2 6v18l10-9zM13 6v18l10-9z"/></svg></button></div>
      <input class="fr" aria-label="Current frame" value="1">
      <div class="bg sm"><button><svg viewBox="0 0 16 20"><path d="M8 4v12L2 10zM10 4h3v12h-3z"/></svg></button><button><svg viewBox="0 0 16 20"><path d="M8 4v12l6-6zM3 4h3v12H3z"/></svg></button></div>
    </div>
    <div class="tr2">
      <div class="bg"><button><svg viewBox="0 0 30 30"><path d="M5 3h18v22H5z"/><path d="M5 3h18v4H5z" fill="#6d7478"/><path d="M14 9l14 15-7 0-4 6z" fill="#111" stroke="#eee"/></svg></button><button><svg viewBox="0 0 30 30"><path d="M4 11h6l9-8v24l-9-8H4z" fill="#46525a" stroke="#999"/><ellipse cx="20" cy="15" rx="5" ry="12" fill="#333c44" stroke="#ddd" stroke-width="2"/><circle cx="16" cy="15" r="3"/></svg></button><button class="c"><svg viewBox="0 0 30 30"><path d="M7 3L3 15l13 1-4-4c6-2 12 2 12 10H3" fill="none" stroke="#f2f2f2" stroke-width="2.500"/><path d="M3 23h25" stroke="#f2f2f2" stroke-width="2.500"/></svg></button><button><svg viewBox="0 0 30 30"><circle cx="15" cy="15" r="12" fill="none" stroke="#e6e6e2" stroke-width="2.500"/><circle cx="15" cy="15" r="8" fill="none" stroke="#aaa"/><path d="M15 8v13M11 15h9" stroke="#eee" stroke-width="2.500"/></svg></button><button class="r"><svg viewBox="0 0 30 30"><path d="M3 9v14M9 9v7M15 9v7M21 9v7M27 9v14" stroke="#aab" stroke-width="2"/></svg></button></div>
      <div class="bg off"><button disabled><svg viewBox="0 0 30 30"><path d="M8 8h3v14H8z" fill="#3c5a30"/><path d="M22 8v14l-9-7z" fill="#585858"/></svg></button><button disabled><svg viewBox="0 0 30 30"><path d="M20 8h3v14h-3z" fill="#3c5a30"/><path d="M8 8v14l9-7z" fill="#585858"/></svg></button></div>
    </div>
  </div>
  <div class="time">
    <svg class="ruler" id="ruler"></svg>
    <div class="range"><input class="dim" aria-label="Global start" value="1"><input aria-label="Range start" value="1"><span class="track"></span><input aria-label="Range end" value="240"><input class="dim" aria-label="Global end" value="240"></div>
  </div>
  <div class="keys">
    <button class="key"><svg viewBox="0 0 30 30"><circle cx="19" cy="9" r="5" fill="none" stroke="#666" stroke-width="3"/><path d="M16 13L6 25M6 25l4 3M9 20l4 3" stroke="#666" stroke-width="3" fill="none"/></svg></button><button class="dd"></button>
  </div>
  <div class="chan">
    <button class="cb r"><svg viewBox="0 0 30 30"><path d="M3 3h20v24H3z" fill="#999" stroke="#111"/><path d="M3 8h5v5H3z" fill="#c22"/><path d="M3 13h5v5H3z" fill="#36c"/><path d="M3 18h5v8H3z" fill="#4a3"/><path d="M12 13c2-8 12-8 13-1M25 6v7h-6M25 16c-2 8-12 8-13 1M12 23v-6h6" fill="none" stroke="#000" stroke-width="5"/><path d="M12 13c2-8 12-8 13-1M25 6v7h-6M25 16c-2 8-12 8-13 1M12 23v-6h6" fill="none" stroke="#eee" stroke-width="2.500"/></svg></button><button class="kc">0 keys, 0/0 channels<i></i></button>
    <button class="cb"><svg viewBox="0 0 30 30"><path d="M2 3h26v24H2z" fill="#000"/><path d="M2 15h26" stroke="#eee"/><path d="M3 14c4-6 7-4 9 1s7 6 15-1" fill="none" stroke="#f0a030" stroke-width="2"/><path d="M3 15c3 2 4 10 7 9s5-18 9-18 3 8 8 9" fill="none" stroke="#5a90d8" stroke-width="2"/></svg></button><span class="combo"><select aria-label="Key mode"><option>Key All Channels</option></select></span>
  </div>
</footer>
<div class="status"><span class="grow"></span><span class="cook"><button class="ib r"><svg viewBox="0 0 30 30"><path d="M5 20C0 10 8 2 16 3s12 8 9 16c-2 5-6 3-8 5-4 3-9 2-12-4z" fill="#d4d4d0"/><path d="M8 10c4-3 10-3 14 0M7 15c5-3 11-2 16 0M10 20c3-3 7-3 11 0M15 4c-3 6-2 12 0 20" fill="none" stroke="#8d8d89"/></svg></button><button class="ib"><svg viewBox="0 0 30 30"><path d="M5 13c2-9 15-10 19-3M25 4v8h-8M25 17c-2 9-15 10-19 3M5 26v-8h8" fill="none" stroke="#666" stroke-width="3"/></svg></button></span><span class="combo"><select aria-label="Update mode"><option>Auto Update</option></select></span></div>
<script src="script.js"></script>
</body>
</html>
```
FILE: styles.css
```
* { box-sizing: border-box; }
:root { --ui: "Noto Sans CJK SC", "Open Sans", sans-serif; --mono: "Noto Sans Mono CJK SC", "DejaVu Sans Mono", monospace; }
body { margin: 0; min-height: 100vh; display: flex; flex-direction: column; background: #191919; color: #c8c8c8; font: 15px/20px var(--ui); border-top: 2px solid #221f20; overflow-x: hidden; }
button, input, select { font: inherit; color: inherit; margin: 0; padding: 0; border: 0; background: none; border-radius: 0; outline: 0; min-width: 0; }
select { appearance: none; }
a { color: inherit; text-decoration: none; }
ul { list-style: none; margin: 0; padding: 0; }
.defs { position: absolute; width: 0; height: 0; }
.grow { flex: 1 1 0; }
b, .b { font-weight: 700; }
.dark { color: #333; }
.lite { color: #ddd; }

.titlebar { display: flex; align-items: center; height: 44px; background: #fff; color: #000; padding: 0 27px 0 11px; border-left: 1px solid #222; }
.titlebar h1 { flex: 1; margin: 0 0 0 5px; font: 17px/24px "Open Sans", sans-serif; white-space: nowrap; }
.logo { width: 24px; height: 24px; }
.win { display: flex; gap: 54px; }
.win svg { width: 16px; height: 16px; display: block; fill: none; stroke: #000; }

.handle { width: 16px; flex: none; align-self: stretch; background: linear-gradient(90deg, #2a2a2a, #484848); border: 1px solid #000; position: relative; }
.handle::after { content: ""; position: absolute; left: 3px; top: 4px; border: 4px solid transparent; border-top: 0; border-bottom: 7px solid #000; }
.handle.dnn::after { top: auto; bottom: 4px; border: 4px solid transparent; border-bottom: 0; border-top: 7px solid #000; }

.menubar { display: flex; align-items: stretch; height: 34px; background: linear-gradient(#3d3d3d, #323232); }
.menu { display: flex; align-items: center; gap: 12px; padding-left: 7px; font-size: 16px; }
.menubar .menu { width: 365px; }
.combo { position: relative; display: flex; align-items: center; height: 30px; background: linear-gradient(#545454, #3d3d3d); border: 1px solid #242424; border-top-color: #5f5f5f; }
.combo::before { content: ""; position: absolute; right: 0; top: 0; bottom: 0; width: 22px; background: linear-gradient(#363636, #272727); pointer-events: none; }
.combo::after { content: ""; position: absolute; right: 7px; top: 50%; margin-top: -9px; width: 8px; height: 18px; background: #8c8c8c; clip-path: polygon(50% 0,100% 40%,50% 40%,50% 60%,100% 60%,50% 100%,0 60%,50% 60%,50% 40%,0 40%); pointer-events: none; }
.combo select { width: 100%; height: 28px; line-height: 20px; padding: 0 24px 2px 19px; }
.combo.desk, .combo.take { height: 34px; gap: 6px; padding-left: 7px; font-size: 16px; }
.combo.desk { width: 176px; margin-right: 6px; }
.combo.take { width: 237px; padding-left: 5px; gap: 4px; }
.combo.desk select, .combo.take select { padding-left: 0; }
.combo.desk svg { width: 21px; height: 21px; flex: none; }
.combo.take svg { width: 26px; height: 26px; flex: none; }
.menubar .ib { width: 45px; }

.ib { position: relative; width: 33px; height: 32px; display: flex; align-items: center; justify-content: center; flex: none; align-self: center; }
.ib svg { width: 26px; height: 26px; display: block; }
.hl { background: linear-gradient(#56708f, #7590b4); }
.r::after, .c::after, .d::after { content: ""; position: absolute; right: 1px; bottom: 3px; border: 4px solid transparent; border-right: 0; border-left: 5px solid #8a8a8a; }
.c::after, .d::after { border: 5px solid transparent; border-bottom: 0; border-top: 5px solid #999; }
.r.hl::after { border-left-color: #2c2c2c; }

.shelves { display: flex; height: 79px; border-top: 1px solid #000; border-bottom: 1px solid #000; background: #3a3a3a; }
.shelf { display: flex; flex-direction: column; min-width: 0; }
.shelf.left { flex: 1093 1 0; }
.shelf.right { flex: 1080 1 0; }
.grip { width: 14px; flex: none; background: #4a4a4a; border: 1px solid #000; border-width: 0 1px; position: relative; }
.grip::after { content: ""; position: absolute; left: 3px; top: 32px; width: 6px; height: 15px; background: radial-gradient(circle, #111 1px, transparent 1px) 0 0/3px 3px; }
.stabs { display: flex; height: 23px; background: #2b2b2b; border-bottom: 1px solid #000; font-size: 12px; line-height: 18px; }
.stabs button { padding: 0 10px 2px 10px; border-left: 1px solid #000; border-top: 1px solid #4c4c4c; background: #2e2e2e; white-space: nowrap; flex: none; }
.stabs .on { background: #454545; padding: 0 9px 2px 8px; border-left: 0; height: 23px; }
.shelf.right .stabs button { padding: 0 9px 2px 10px; }
.shelf.right .stabs .on { padding: 0 11px 2px 9px; }
.plus { width: 13px; height: 13px; flex: none; align-self: center; background: linear-gradient(#e0e0e0, #e0e0e0) 50%/3px 100% no-repeat, linear-gradient(#e0e0e0, #e0e0e0) 50%/100% 3px no-repeat; }
.stabs .plus { margin: 0 13px 0 10px; }
.shelf.right .plus { margin-left: 17px; }
.dn { flex: none; align-self: center; border: 5px solid transparent; border-bottom: 0; border-top: 8px solid #e0e0e0; }
.tools { display: flex; flex: 1; padding-left: 21px; background: linear-gradient(#484848, #383838); overflow: hidden; position: relative; }
.tools button { display: flex; flex-direction: column; align-items: center; flex: none; min-width: 57px; padding: 4px 6px 0 7px; font-size: 12px; line-height: 12px; white-space: nowrap; }
.tools svg { width: 29px; height: 29px; flex: none; }
.tools button span { margin: auto 0; position: relative; top: -2px; padding-top: 2px; }
.tools .wide { width: 92px; }
.tools .wide svg { height: 25px; margin-bottom: -3px; }
.tools .cut { flex: none; min-width: 0; width: 28px; overflow: hidden; padding: 4px 0 0 16px; align-items: flex-start; }
.tools .rt { position: absolute; right: 0; top: 0; bottom: 0; width: 24px; background: linear-gradient(#484848, #383838); }
.rt::after { content: ""; position: absolute; right: 8px; top: 22px; border: 5px solid transparent; border-right: 0; border-left: 8px solid #888; }

.desk-area { flex: 1; display: grid; grid-template-columns: 10px minmax(0, 1482fr) 9px minmax(0, 702fr); background: #3a3a3a; min-height: 0; }
.vsplit { background: #454545; border-left: 2px solid #000; position: relative; }
.vsplit::after { content: ""; position: absolute; left: 1px; top: 530px; width: 6px; height: 28px; background: radial-gradient(circle, #888 1px, transparent 1px) 0 0/3px 4px; }
.pane, .col { display: flex; flex-direction: column; min-width: 0; min-height: 0; }
.ptabs { display: flex; align-items: stretch; height: 25px; flex: none; background: #2b2b2b; font-size: 13px; border-bottom: 1px solid #444; }
.ptabs button { display: flex; align-items: center; gap: 20px; padding: 0 9px; background: linear-gradient(90deg, #222, #303030 6px); border-right: 2px solid #222; white-space: nowrap; }
.scene .ptabs button { gap: 18px; }
.ptabs .on, .scene .ptabs .on { background: #454545; border-right: 0; height: 25px; gap: 23px; }
.ptabs .it { font-style: italic; }
.ptabs button i { width: 7px; height: 8px; background: #ddd; clip-path: polygon(0 0,35% 0,50% 30%,65% 0,100% 0,70% 50%,100% 100%,65% 100%,50% 70%,35% 100%,0 100%,30% 50%); }
.ptabs .plus { margin-left: 6px; }
.sq { width: 14px; height: 11px; background: #dcdcd8; align-self: center; margin-right: 12px; }
.ptabs .dn { margin-right: 7px; }
.path { display: flex; align-items: center; height: 45px; flex: none; padding: 0 2px 0 0; background: linear-gradient(#474747, #363636); border-bottom: 1px solid #000; }
.crumbs { flex: 1; display: flex; align-items: center; height: 33px; margin: 0 7px 0 8px; background: linear-gradient(#323232, #404040); border: 1px solid #000; border-top: 2px solid #151515; font-size: 16px; min-width: 0; }
.crumbs a { display: flex; align-items: center; gap: 3px; padding: 0 5px; color: #dcdcdc; }
.crumbs a svg { width: 27px; height: 27px; }
.chev { width: 8px; height: 30px; }
.pd { margin-left: auto; width: 18px; height: 30px; background: #2b2b2b; display: flex; align-items: center; justify-content: center; }
.pd::after, .dd::after { content: ""; border: 4px solid transparent; border-bottom: 0; border-top: 7px solid #8a8a8a; }
.m1 { margin-left: 14px; }
.path .ib svg { width: 28px; height: 28px; }

.vbar { display: flex; align-items: center; height: 44px; flex: none; background: #2d2d2d; border-bottom: 1px solid #000; border-top: 1px solid #555; font-size: 16px; }
.vbar .handle { width: 14px; }
.vbar b { padding: 0 4px 0 0; }
.vtools, .vg { display: flex; align-items: center; }
.vg { padding: 0 5px 0 6px; gap: 1px; border-left: 1px solid #4a4a4a; }
.vg.first { gap: 12px; border-left: 0; padding-left: 0; }
.vg .hl { width: 31px; }
.vbar .ib svg { width: 28px; height: 28px; }
.vbar > .ib:last-child { margin-right: 1px; }
.work { flex: 1; display: flex; min-height: 0; }
.ltools { width: 46px; flex: none; display: flex; flex-direction: column; align-items: center; background: #3a3a3a; }
.hh { align-self: stretch; height: 14px; flex: none; background: linear-gradient(#4c4c4c, #333); border: 1px solid #000; position: relative; }
.hh::after { content: ""; position: absolute; top: 2px; border: 4px solid transparent; }
.lf::after { left: 3px; border-left: 0; border-right: 7px solid #000; }
.rg::after { right: 3px; border-right: 0; border-left: 7px solid #000; }
.tgroup { margin-top: 7px; background: #262626; border: 1px solid #1a1a1a; box-shadow: 0 0 2px #111; }
.tgroup .ib { width: 34px; height: 33px; }
.tb { position: relative; width: 38px; height: 38px; flex: none; display: flex; align-items: center; justify-content: center; border: 1px solid transparent; background-clip: padding-box; }
.tb svg { width: 30px; height: 30px; }
.tb.s { height: 36px; }
.sep { align-self: stretch; flex: none; height: 17px; background: linear-gradient(#555, #555) 50% 60%/calc(100% - 4px) 1px no-repeat; }
.sep.s { height: 13px; }
.rtools { width: 35px; flex: none; display: flex; flex-direction: column; background: #3a3a3a; align-items: stretch; }
.rtools .hh { margin-bottom: 25px; }
.rtools .sep.s { height: 7px; }
.db { position: relative; height: 34px; flex: none; display: flex; align-items: center; justify-content: center; border: 1px solid transparent; border-left: 2px solid transparent; background-clip: padding-box; }
.db svg { width: 24px; height: 24px; }
.bl1 { color: #c2c2be; }
.bl2 { color: #dcd9a0; }
.num b { position: absolute; right: 5px; top: 4px; font: bold 12px/14px "Open Sans", sans-serif; color: #eee; }
.more { align-self: center; margin-top: 1px; border: 5px solid transparent; border-bottom: 0; border-top: 7px solid #888; }

.view { position: relative; flex: 1; min-width: 0; overflow: hidden; background: #91a4ad; }
.scene3d { position: absolute; inset: 0; width: 100%; height: 100%; }
#floor path { fill: none; }
.minor { stroke: #5f7480; stroke-opacity: .36; }
.major { stroke: #5f7480; stroke-opacity: .42; stroke-width: 2; }
#marks text { font-family: "Open Sans", sans-serif; text-anchor: middle; dominant-baseline: central; }
.cams { position: absolute; right: 8px; top: 8px; display: flex; gap: 8px; }
.cams button { height: 25px; padding: 0 9px 2px; border: 1px solid #b4bcc0; border-radius: 13px; background: rgba(70, 88, 98, .65); color: #eef0f0; font-size: 14px; line-height: 20px; display: flex; align-items: center; gap: 5px; }
.cams i { border: 3px solid transparent; border-bottom: 0; border-top: 4px solid #fff; margin-top: 3px; }
.axes { position: absolute; left: 4px; bottom: 3px; width: 26px; height: 26px; }
.hint { position: absolute; left: 17px; bottom: 9px; margin: 0; display: flex; gap: 6px; color: #111; white-space: nowrap; }

.opname { display: flex; align-items: center; height: 36px; flex: none; border-bottom: 1px solid #000; margin: 0 0 0 3px; padding: 1px 0 0; }
.opname label { font-weight: 700; width: 120px; white-space: nowrap; }
.opname input { flex: 1; margin-right: 4px; }
.opname .ib { width: 36px; }
.opname .ib:first-child { width: 34px; }
.opname .ib svg { width: 28px; height: 28px; }
input { font-family: var(--mono); font-size: 17px; line-height: 20px; color: #eee; }
input:not([type]) { height: 27px; background: #131313; border: 2px solid #2a2a2a; border-top-color: #242424; padding: 0 2px 2px 2px; }
.opname input:not([type]) { font-size: 19px; }
input:disabled:not([type]) { background: #2e2e2e; }
.form { padding: 3px 32px 20px 0; }
.row { display: flex; align-items: center; }
.h28 { height: 28px; } .h30 { height: 30px; } .h32 { height: 32px; } .h34 { height: 34px; } .h36 { height: 36px; }
.mt { margin-top: 6px; }
.l1, .l2, .l3 { text-align: right; flex: none; white-space: nowrap; }
.l1 { width: 210px; padding-right: 16px; }
.l3 { width: 298px; padding-right: 19px; }
.l2 { width: 167px; padding-right: 19px; }
.rm { width: 111px; padding-left: 31px; display: flex; flex: none; }
.rm button { width: 25px; height: 26px; border: 1px solid #111; background: linear-gradient(#555, #3c3c3c); display: flex; align-items: center; justify-content: center; }
.rm svg { width: 16px; height: 16px; }
input[type=checkbox] { appearance: none; width: 20px; height: 20px; flex: none; background: #131313; border: 2px solid #2a2a2a; position: relative; }
input[type=checkbox]:checked::after { content: ""; position: absolute; left: 0; top: -1px; width: 16px; height: 18px; background: #eee; clip-path: polygon(8% 48%,28% 42%,42% 62%,70% 20%,100% 0,72% 48%,46% 100%,30% 74%); }
input[type=checkbox]:disabled { background: #333; border-color: #363636; margin-left: 3px; }
.ct { padding-left: 10px; white-space: nowrap; }
.enc { font-size: 14px; font-weight: 700; }
.ml2 { margin-left: 10px; }
.off { color: #777; }
.top { padding-right: 0; margin-right: -16px; }
.dd { width: 26px; height: 28px; display: flex; align-items: center; justify-content: center; background: linear-gradient(#333, #2a2a2a); border: 1px solid #222; }
.pick { width: 38px; margin-right: -4px; }
.w178 { width: 178px; } .w116 { width: 116px; } .w164 { width: 164px; } .w93 { width: 93px; }
.w58 { width: 59px; } .w101 { width: 101px; }
.mr { margin-right: 18px; }
.ml { margin-left: 3px; }
.pm { width: 23px; height: 29px; border: 1px solid #000; border-top-width: 2px; background: linear-gradient(#555, #3c3c3c); display: flex; align-items: center; justify-content: center; }
.pm .plus { width: 11px; height: 11px; }
.minus { width: 11px; height: 3px; background: #ddd; }
.clear { width: 83px; height: 30px; margin-left: 2px; padding-bottom: 2px; background: linear-gradient(#555, #3d3d3d); border: 1px solid #222; border-top-color: #5f5f5f; }
input[type=range] { appearance: none; height: 28px; margin-left: 3px; background: linear-gradient(#000, #000) 50% 50%/100% 5px no-repeat, linear-gradient(#888, #888) 33.300% 19px/1px 2px no-repeat, linear-gradient(#888, #888) 66.600% 19px/1px 2px no-repeat, linear-gradient(#888, #888) 100% 19px/1px 2px no-repeat; }
input[type=range]::-webkit-slider-thumb { appearance: none; width: 6px; height: 28px; background: #8c8c8c; border: 1px solid #000; border-left-color: #ccc; }
.four { flex: 1; display: grid; grid-template-columns: repeat(4, minmax(0, 1fr)); gap: 2px; }

.hsplit { height: 9px; flex: none; background: #454545; border-top: 1px solid #777; display: flex; justify-content: center; align-items: center; gap: 20px; }
.hsplit i { border: 3px solid transparent; }
.hsplit .u { border-top: 0; border-bottom: 4px solid #888; }
.hsplit .d { border-bottom: 0; border-top: 4px solid #888; }
.hsplit .dots { border: 0; width: 26px; height: 6px; background: radial-gradient(circle, #888 1px, transparent 1px) 0 0/3px 3px; }
.net { flex: 1; }
.nmenu { display: flex; align-items: stretch; height: 34px; flex: none; background: linear-gradient(#3d3d3d, #323232); border-bottom: 1px solid #000; position: relative; }
.nmenu .handle { width: 14px; }
.nmenu .menu { padding-left: 35px; gap: 20px; }
.nicons { display: flex; padding-left: 7px; }
.nicons .ib svg { width: 25px; height: 25px; }
.nmenu .rt::after { top: 11px; right: 6px; }
.canvas { flex: 1; position: relative; background: #2e2e2e; min-height: 0; overflow: hidden; }
.canvas svg { position: absolute; inset: 0; width: 100%; height: 100%; }
.ctx { position: absolute; right: 14px; top: 17px; font-size: 31px; line-height: 44px; color: #4b4b4b; }
.nl { fill: #cacaca; font-size: 17px; }
.nl .hi { fill: #6f9fe0; font-size: 16px; }

.playbar { display: flex; height: 98px; flex: none; background: #2d2d2d; border-top: 2px solid #5a5a5a; border-bottom: 1px solid #000; }
.transport { padding: 10px 2px 0 4px; flex: none; }
.tr1, .tr2 { display: flex; gap: 5px; }
.tr2 { margin-top: 9px; }
.bg { display: flex; }
.bg button { position: relative; width: 37px; height: 38px; display: flex; align-items: center; justify-content: center; background: linear-gradient(#525252, #3a3a3a); border: 1px solid #1a1a1a; border-top-color: #5a5a5a; }
.bg svg { width: 31px; height: 31px; fill: #e4e4e0; }
.bg .hl { background: linear-gradient(#56708f, #7590b4); }
.tr2 button { height: 33px; }
.tr2 svg { width: 28px; height: 28px; }
.bg.off button { width: 31px; background: #353535; border-color: #2a2a2a; }
.bg.sm button { width: 19px; }
.bg.sm svg { width: 16px; height: 20px; }
.tr1 .fr:not([type]) { width: 63px; height: 38px; font-size: 17px; padding-left: 1px; }
.time { flex: 1; min-width: 0; display: flex; flex-direction: column; }
.ruler { width: 100%; height: 58px; display: block; overflow: visible; }
.ruler text { fill: #9a9a9a; font-size: 13px; text-anchor: middle; }
.ruler .cur { fill: #fff; font-size: 17px; }
.range { display: flex; gap: 3px; align-items: center; height: 32px; }
.range input:not([type]) { width: 58px; height: 28px; flex: none; font-size: 18px; padding-left: 3px; }
.range .dim:not([type]) { background: #1f1f1f; }
.track { flex: 1; height: 5px; background: #727272; position: relative; margin: 0 4px; }
.track::before, .track::after { content: ""; position: absolute; top: -5px; border: 7px solid transparent; }
.track::before { left: -7px; border-right: 0; border-left: 9px solid #bbb; }
.track::after { right: -7px; border-left: 0; border-right: 9px solid #bbb; }
.keys { width: 90px; flex: none; display: flex; align-items: center; padding-left: 5px; }
.key { width: 55px; height: 55px; border-radius: 50%; border: 1px solid #222; background: #373737; display: flex; align-items: center; justify-content: center; z-index: 1; }
.key svg { width: 28px; height: 28px; }
.keys .dd { margin-left: -7px; background: #3a3a3a; width: 29px; }
.chan { width: 254px; flex: none; padding: 12px 5px 0 0; display: grid; grid-template-columns: 33px 1fr; grid-auto-rows: 32px; gap: 6px 4px; }
.cb { position: relative; border: 1px solid #181818; background: linear-gradient(#4c4c4c, #3a3a3a); display: flex; align-items: center; justify-content: center; }
.cb svg { width: 26px; height: 26px; }
.kc { display: flex; align-items: center; justify-content: space-between; padding: 0 8px 2px 22px; background: linear-gradient(#525252, #3a3a3a); border: 1px solid #181818; font-size: 15px; }
.kc i { border: 4px solid transparent; border-top: 0; border-bottom: 8px solid #8c8c8c; }
.chan .combo { height: 32px; }
.chan .combo select { padding-left: 17px; }
.status { display: flex; height: 34px; flex: none; background: #191919; }
.cook { display: flex; background: #383838; width: 73px; padding: 0 2px; }
.status .combo { width: 148px; height: 34px; }
```
FILE: script.js
```
const NS = 'http://www.w3.org/2000/svg';
function add(parent, tag, attrs, text) {
  const el = document.createElementNS(NS, tag);
  for (const k in attrs) el.setAttribute(k, attrs[k]);
  if (text !== undefined) el.textContent = text;
  parent.appendChild(el);
}

// Ground plane: project (x, z) through the viewport camera.
const K = 0.0149;
function project(x, z) {
  const u = x + z, v = x - z, w = 1 - K * u;
  return [700 + 28.87 * v / w, (668.8 + 7.05 * u) / w - 3].map(n => n.toFixed(1)).join(' ');
}
const floor = document.getElementById('floor');
let minor = '', major = '';
for (let n = -105; n <= 60; n++) {
  const end = Math.min(60, 58 - n);
  const seg = 'M' + project(n, -105) + 'L' + project(n, end) + 'M' + project(-105, n) + 'L' + project(end, n);
  if (n % 5 === 0) major += seg; else minor += seg;
}
add(floor, 'path', { d: minor, class: 'minor' });
add(floor, 'path', { d: major, class: 'major' });

const marks = document.getElementById('marks');
const labels = [
  ['10', 1034, 853, 21, 32, '#a87f80'], ['-15', 345, 448, 13, 32, '#75696f'], ['-20', 255, 397, 12, 28, '#72696f'],
  ['-25', 174, 349, 11, 25, '#6f686e'], ['-30', 101, 306, 10, 22, '#6c676e'], ['-35', 36, 268, 9, 20, '#69666e'],
  ['10', 354, 880, 21, 142, '#7c86a0'], ['5', 544, 766, 16, 142, '#7c86a0'], ['-15', 1052, 464, 13, 142, '#5f7083'],
  ['-20', 1144, 410, 12, 145, '#5d6e81'], ['-25', 1226, 361, 11, 148, '#5a6c7f'], ['-30', 1300, 317, 10, 150, '#586a7d'], ['-35', 1366, 277, 9, 152, '#56687b']
];
for (const [t, x, y, size, rot, fill] of labels)
  add(marks, 'text', { 'font-size': size, fill, transform: `translate(${x} ${y}) rotate(${rot})` }, t);

// Playbar ruler: one tick every 6 frames, a labelled one every 24.
const ruler = document.getElementById('ruler');
function drawRuler() {
  ruler.replaceChildren();
  const w = ruler.clientWidth, step = w / 240;
  const at = f => Math.round(2 + (f - 1) * step) + 0.5;
  add(ruler, 'path', { d: `M2 30.5H${w}`, stroke: '#a8a8a8', 'stroke-width': 2 });
  for (let f = 6; f <= 240; f += 6) {
    const big = f % 24 === 0;
    add(ruler, 'path', { d: `M${at(f)} ${big ? 21 : 24}V${big ? 41 : 37}`, stroke: big ? '#9a9a9a' : '#777' });
    if (big) add(ruler, 'text', { x: f === 240 ? w - 4 : at(f) + 7, y: 14 }, f === 240 ? 2 : f);
  }
  add(ruler, 'path', { d: 'M1.5 3.5H33.500V24.500H8L1.500 31z', fill: '#000', stroke: '#eee' });
  add(ruler, 'text', { x: 17, y: 21, class: 'cur' }, 1);
}
drawRuler();
addEventListener('resize', drawRuler);
```
